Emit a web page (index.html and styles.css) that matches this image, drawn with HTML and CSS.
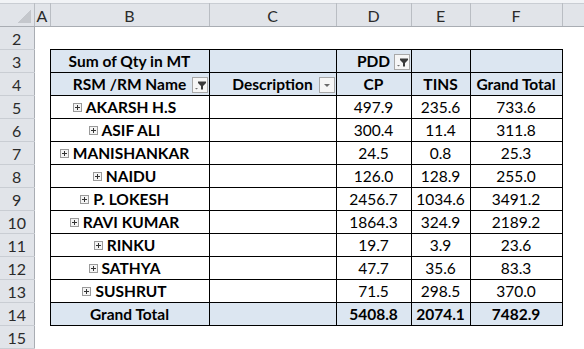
FILE: index.html
```html
<!DOCTYPE html>
<html>
<head>
  <meta charset="UTF-8">
  <title>Pivot</title>
  <link rel="stylesheet" href="styles.css">
</head>
<body>
<div class="topedge"></div>
<table class="sheet">
  <colgroup>
    <col class="c-num"><col class="c-a"><col class="c-b"><col class="c-c"><col class="c-d"><col class="c-e"><col class="c-f"><col class="c-g">
  </colgroup>
  <tr class="colhead">
    <th class="corner"><span class="tri"></span></th>
    <th>A</th><th>B</th><th>C</th><th>D</th><th>E</th><th>F</th><th class="last"></th>
  </tr>
  <tr>
    <th class="rownum">2</th><td></td><td></td><td></td><td></td><td></td><td></td><td></td>
  </tr>
  <tr>
    <th class="rownum">3</th><td></td>
    <td class="pv pv-hd">Sum of Qty in MT</td>
    <td class="pv pv-hd"></td>
    <td class="pv pv-hd has-btn">PDD
      <svg class="btn" width="16" height="16" viewBox="0 0 16 16"><rect x="0.5" y="0.5" width="15" height="15" fill="#f6f6f6" stroke="#a8a8a8"/><path d="M6 4.5h8v1.5l-3 3v3.5h-2V9l-3-3z" fill="#3a3a3a"/><path d="M3 11h3l-1.5 1.5z" fill="#707070"/></svg>
    </td>
    <td class="pv pv-hd"></td>
    <td class="pv pv-hd"></td>
    <td></td>
  </tr>
  <tr>
    <th class="rownum">4</th><td></td>
    <td class="pv pv-hd has-btn">RSM /RM Name
      <svg class="btn" width="16" height="16" viewBox="0 0 16 16"><rect x="0.5" y="0.5" width="15" height="15" fill="#f6f6f6" stroke="#a8a8a8"/><path d="M6 4.5h8v1.5l-3 3v3.5h-2V9l-3-3z" fill="#3a3a3a"/><path d="M3 11h3l-1.5 1.5z" fill="#707070"/></svg>
    </td>
    <td class="pv pv-hd has-btn">Description
      <svg class="btn" width="16" height="16" viewBox="0 0 16 16"><rect x="0.5" y="0.5" width="15" height="15" fill="#f6f6f6" stroke="#a8a8a8"/><path d="M5 7h6l-3 3z" fill="#6a6a6a"/></svg>
    </td>
    <td class="pv pv-hd">CP</td>
    <td class="pv pv-hd">TINS</td>
    <td class="pv pv-hd">Grand Total</td>
    <td></td>
  </tr>
  <tr>
    <th class="rownum">5</th><td></td>
    <td class="pv name"><span class="plus"></span>AKARSH H.S</td><td class="pv"></td>
    <td class="pv">497.9</td><td class="pv">235.6</td><td class="pv">733.6</td><td></td>
  </tr>
  <tr>
    <th class="rownum">6</th><td></td>
    <td class="pv name"><span class="plus"></span>ASIF ALI</td><td class="pv"></td>
    <td class="pv">300.4</td><td class="pv">11.4</td><td class="pv">311.8</td><td></td>
  </tr>
  <tr>
    <th class="rownum">7</th><td></td>
    <td class="pv name"><span class="plus"></span>MANISHANKAR</td><td class="pv"></td>
    <td class="pv">24.5</td><td class="pv">0.8</td><td class="pv">25.3</td><td></td>
  </tr>
  <tr>
    <th class="rownum">8</th><td></td>
    <td class="pv name"><span class="plus"></span>NAIDU</td><td class="pv"></td>
    <td class="pv">126.0</td><td class="pv">128.9</td><td class="pv">255.0</td><td></td>
  </tr>
  <tr>
    <th class="rownum">9</th><td></td>
    <td class="pv name"><span class="plus"></span>P. LOKESH</td><td class="pv"></td>
    <td class="pv">2456.7</td><td class="pv">1034.6</td><td class="pv">3491.2</td><td></td>
  </tr>
  <tr>
    <th class="rownum">10</th><td></td>
    <td class="pv name"><span class="plus"></span>RAVI KUMAR</td><td class="pv"></td>
    <td class="pv">1864.3</td><td class="pv">324.9</td><td class="pv">2189.2</td><td></td>
  </tr>
  <tr>
    <th class="rownum">11</th><td></td>
    <td class="pv name"><span class="plus"></span>RINKU</td><td class="pv"></td>
    <td class="pv">19.7</td><td class="pv">3.9</td><td class="pv">23.6</td><td></td>
  </tr>
  <tr>
    <th class="rownum">12</th><td></td>
    <td class="pv name"><span class="plus"></span>SATHYA</td><td class="pv"></td>
    <td class="pv">47.7</td><td class="pv">35.6</td><td class="pv">83.3</td><td></td>
  </tr>
  <tr>
    <th class="rownum">13</th><td></td>
    <td class="pv name"><span class="plus"></span>SUSHRUT</td><td class="pv"></td>
    <td class="pv">71.5</td><td class="pv">298.5</td><td class="pv">370.0</td><td></td>
  </tr>
  <tr>
    <th class="rownum">14</th><td></td>
    <td class="pv pv-hd">Grand Total</td><td class="pv pv-hd"></td>
    <td class="pv pv-hd">5408.8</td><td class="pv pv-hd">2074.1</td><td class="pv pv-hd">7482.9</td><td></td>
  </tr>
  <tr>
    <th class="rownum">15</th><td></td><td></td><td></td><td></td><td></td><td></td><td></td>
  </tr>
</table>
</body>
</html>
```

FILE: styles.css
```css
body {
  margin: 0;
  background: #fff;
  font-family: Lato, "Open Sans", sans-serif;
  font-size: 15.5px;
  color: #000;
}

.topedge {
  height: 3px;
  background: #f1f3f6;
}

.sheet {
  border-collapse: collapse;
  table-layout: fixed;
  width: 584px;
}
.sheet tr {
  height: 23px;
}
.sheet td,
.sheet th {
  padding: 0;
  text-align: center;
  vertical-align: middle;
  white-space: nowrap;
  overflow: hidden;
}

.c-num { width: 34px; }
.c-a { width: 16px; }
.c-b { width: 159px; }
.c-c { width: 127px; }
.c-d { width: 75px; }
.c-e { width: 59px; }
.c-f { width: 92px; }
.c-g { width: 22px; }

/* column and row headers */
.colhead th {
  background: #e1e4e9;
  border-top: 1px solid #c9cdd3;
  border-right: 1px solid #b9bdc3;
  border-bottom: 1px solid #a9adb3;
  font-weight: normal;
  font-size: 16px;
  color: #2b2b2b;
}
.colhead th.last {
  border-right: none;
}
.corner {
  position: relative;
}
.tri {
  position: absolute;
  right: 3px;
  bottom: 3px;
  width: 14px;
  height: 14px;
  background: linear-gradient(to top left, #c4c7cc 50%, transparent 50%);
}
.rownum {
  background: #e1e4e9;
  border-right: 1px solid #a9adb3;
  border-bottom: 1px solid #c9cdd3;
  font-weight: normal;
  font-size: 16px;
  color: #2b2b2b;
}

/* pivot table */
.pv {
  border: 1px solid #000;
  background: #fff;
}
.pv-hd {
  background: #dce6f1;
  font-weight: bold;
}
.name {
  font-weight: bold;
  padding-right: 10px !important;
}
.has-btn {
  position: relative;
}
.btn {
  position: absolute;
  right: 1px;
  top: 4px;
}
.plus {
  display: inline-block;
  width: 9px;
  height: 9px;
  margin-right: 4px;
  vertical-align: 1px;
  box-sizing: border-box;
  border: 1px solid #9a9a9a;
  background:
    linear-gradient(#333, #333) center / 5px 1px no-repeat,
    linear-gradient(#333, #333) center / 1px 5px no-repeat,
    #f4f4f4;
}
```
